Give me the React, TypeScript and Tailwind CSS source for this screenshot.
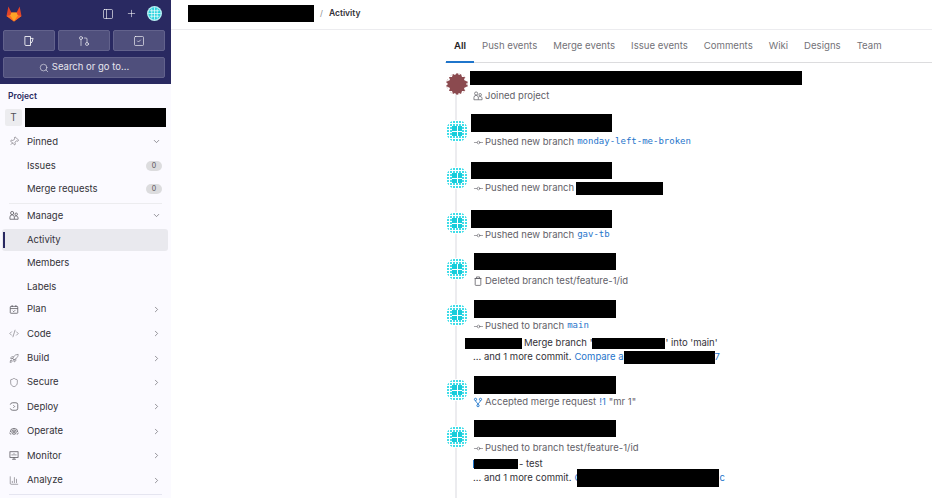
import {
  ChartColumn,
  ChevronDown,
  ChevronRight,
  CodeXml,
  GitCommitHorizontal,
  GitPullRequest,
  PanelLeft,
  Pin,
  Plus,
  Rocket,
  Search,
  Shield,
  SquareCheck,
} from "lucide-react";
import type { ReactNode } from "react";

const Black = ({ className }: { className: string }) => (
  <div className={`bg-black shrink-0 ${className}`} />
);

const Logo = () => (
  <svg width="18" height="18" viewBox="0 0 24 24">
    <path d="M12 22 2 14.5 4.5 2l4 8h7l4-8L22 14.5z" fill="#e24329" />
    <path d="M12 22 2 14.5l6.5-1.5z" fill="#fc6d26" />
    <path d="M12 22l10-7.5-6.5-1.5z" fill="#fc6d26" />
    <path d="M8.5 10h7L17 14l-5 8-5-8z" fill="#fca326" />
  </svg>
);

const IssuesIcon = () => (
  <svg width="12" height="12" viewBox="0 0 16 16" fill="none" stroke="currentColor" strokeWidth="1.1">
    <path d="M2.5 2h7.5v12H4a1.5 1.5 0 0 1-1.5-1.5z" />
    <path d="M10 4.5h3.5L12 9.5l-2 1.5" />
  </svg>
);

const UsersIcon = ({ size = 11 }: { size?: number }) => (
  <svg width={size} height={size} viewBox="0 0 16 16" fill="none" stroke="currentColor" strokeWidth="1.2">
    <circle cx="5" cy="4" r="2.5" />
    <circle cx="11.5" cy="6" r="2" />
    <path d="M1.5 14V10.5a3.5 3.5 0 0 1 7 0V14z" />
    <path d="M8.5 14h6v-2a3 3 0 0 0-5.5-1.8" />
  </svg>
);

const TrashIcon = () => (
  <svg width="10" height="10" viewBox="0 0 16 16" fill="none" stroke="currentColor" strokeWidth="1.3">
    <path d="M3.5 4h9v10a1 1 0 0 1-1 1h-7a1 1 0 0 1-1-1z" />
    <path d="M2.5 4h11M5.5 4V1.5h5V4" />
  </svg>
);

const MergedIcon = () => (
  <svg width="10" height="11" viewBox="0 0 16 16" fill="none" stroke="#1f75cb" strokeWidth="1.5">
    <circle cx="4" cy="3" r="1.8" />
    <circle cx="12" cy="3" r="1.8" />
    <circle cx="8" cy="13" r="1.8" />
    <path d="M4 5c0 3 4 3 4 6M12 5c0 3-4 3-4 6" />
  </svg>
);

const Identicon = () => {
  const cells = [];
  for (let x = 0; x < 7; x++) {
    for (let y = 0; y < 7; y++) {
      const dx = x - 3;
      const dy = y - 3;
      if (dx * dx + dy * dy <= 13 && (Math.abs(dx) > 1 || Math.abs(dy) > 1)) {
        cells.push(<rect key={`${x}-${y}`} x={x * 3 + 0.5} y={y * 3 + 0.5} width="2" height="2" fill="#3fdde8" />);
      }
    }
  }
  return (
    <svg width="22" height="22" viewBox="0 0 22 22" className="shrink-0 rounded-full" shapeRendering="crispEdges">
      <rect width="22" height="22" fill="#ffffff" />
      {cells}
      <rect x="6" y="6" width="10" height="10" fill="#18ccda" />
      <path d="M11 6v10M6 11h10" stroke="#ffffff" strokeWidth="1" />
    </svg>
  );
};

const MaroonAvatar = () => (
  <svg width="22" height="22" viewBox="0 0 22 22" className="shrink-0">
    <circle cx="11" cy="11" r="10.5" fill="none" stroke="#e3d3d4" strokeWidth="1" strokeDasharray="3 4" />
    <path
      d="M11 0l2 2 2-1 1 3 3 0-1 3 4 2-2 2 2 2-4 2 1 3-3 0-1 3-2-1-2 2-2-2-2 1-1-3-3 0 1-3-4-2 2-2-2-2 4-2-1-3 3 0 1-3 2 1z"
      fill="#8b4a4f"
    />
  </svg>
);

const NavRow = ({ icon, label, open }: { icon: ReactNode; label: string; open?: boolean }) => (
  <div className="flex items-center h-[24.4px] pl-[9px] pr-[10px] text-[#333238]">
    <span className="w-[10px] flex justify-center text-[#535158]">{icon}</span>
    <span className="ml-[8px] flex-1">{label}</span>
    {open ? (
      <ChevronDown size={9} className="text-[#737278]" />
    ) : (
      <ChevronRight size={9} className="text-[#737278]" />
    )}
  </div>
);

const SubRow = ({ label, count }: { label: string; count?: number }) => (
  <div className="flex items-center h-[23.3px] pl-[27px] pr-[9px] text-[#333238]">
    <span className="flex-1">{label}</span>
    {count !== undefined && (
      <span className="w-[16px] h-[10px] rounded-full bg-[#dcdcde] text-[7px] leading-[10px] text-center text-[#535158]">
        {count}
      </span>
    )}
  </div>
);

const Sidebar = () => {
  const ic = { size: 11, strokeWidth: 1.25 };
  return (
    <aside className="w-[171px] shrink-0 h-full bg-[#fbfaff] flex flex-col overflow-hidden">
      <div className="h-[84px] bg-[#292961] px-[3px] text-white shrink-0">
        <div className="h-[30px] flex items-center">
          <div className="ml-[2px] -mt-[3px]">
            <Logo />
          </div>
          <div className="flex-1" />
          <PanelLeft size={12} strokeWidth={1.25} className="mb-[3px]" />
          <Plus size={11} strokeWidth={1.25} className="ml-[12px] mb-[3px]" />
          <div className="ml-[10px] mr-[6px] mb-[3px]">
            <svg width="15" height="15" viewBox="0 0 22 22">
              <circle cx="11" cy="11" r="11" fill="#b8f1f4" />
              <circle cx="11" cy="11" r="9" fill="#2cd3de" />
              <path d="M7 4v14M11 2v18M15 4v14M4 7h14M2 11h18M4 15h14" stroke="#ffffff" strokeWidth="1" />
            </svg>
          </div>
        </div>
        <div className="flex gap-[3px] w-[162px]">
          {[<IssuesIcon key="i" />, <GitPullRequest key="m" size={12} strokeWidth={1.25} />, <SquareCheck key="t" size={12} strokeWidth={1.25} />].map((icon, i) => (
            <div
              key={i}
              className="flex-1 h-[21px] rounded-[2px] bg-[#4f4f7c] border border-[#62628c] flex items-center justify-center"
            >
              {icon}
            </div>
          ))}
        </div>
        <div className="mt-[6px] w-[162px] h-[21px] rounded-[2px] bg-[#4f4f7c] border border-[#62628c] flex items-center justify-center gap-[3px] text-[9.5px] text-[#e6e6ee]">
          <Search size={10} strokeWidth={1.5} />
          <span>Search or go to...</span>
        </div>
      </div>

      <div className="text-[9.5px] pt-[6px]">
        <div className="h-[12px] pl-[8px] text-[8.5px] leading-[12px] font-semibold text-[#292961]">
          Project
        </div>
        <div className="flex items-center mt-[6px] pl-[5px] gap-[3px] h-[19px]">
          <div className="w-[17px] h-[17px] rounded-[2px] bg-[#ececef] text-[#535158] text-[10px] flex items-center justify-center">
            T
          </div>
          <Black className="w-[141px] h-[19px]" />
        </div>
        <div className="mt-[2.6px]">
          <NavRow icon={<Pin {...ic} className="rotate-45" />} label="Pinned" open />
          <SubRow label="Issues" count={0} />
          <SubRow label="Merge requests" count={0} />
        </div>
        <div className="mx-[9px] mt-[2px] border-t border-[#ececef]" />
        <div>
          <NavRow icon={<UsersIcon />} label="Manage" open />
          <div className="relative ml-[2px] mr-[3px] mt-[1px] mb-[1px] h-[22px] rounded-[3px] bg-[#e9e9ee] flex items-center pl-[25px] text-[#333238]">
            <div className="absolute left-[1px] top-[3px] w-[2px] h-[16px] bg-[#292961]" />
            Activity
          </div>
          <SubRow label="Members" />
          <SubRow label="Labels" />
        </div>
        <div className="-mt-[1.4px]">
          <NavRow
            icon={
              <svg width="11" height="11" viewBox="0 0 16 16" fill="none" stroke="currentColor" strokeWidth="1.2">
                <rect x="2" y="3" width="12" height="11" rx="1" />
                <path d="M2 6.5h12M5 1v3M11 1v3M6 10l1.5 1.5L10 9" />
              </svg>
            }
            label="Plan"
          />
        </div>
        <NavRow icon={<CodeXml {...ic} />} label="Code" />
        <NavRow icon={<Rocket {...ic} />} label="Build" />
        <NavRow icon={<Shield {...ic} />} label="Secure" />
        <NavRow
          icon={
            <svg width="11" height="11" viewBox="0 0 16 16" fill="none" stroke="currentColor" strokeWidth="1.2">
              <path d="M2 5a4 4 0 0 1 4-3h5a3 3 0 0 1 3 3v6a3 3 0 0 1-3 3H6a4 4 0 0 1-4-3" />
              <path d="M7 6l2 2-2 2" />
            </svg>
          }
          label="Deploy"
        />
        <NavRow
          icon={
            <svg width="11" height="11" viewBox="0 0 16 16" fill="none" stroke="currentColor" strokeWidth="1.2">
              <circle cx="8" cy="9" r="3.5" />
              <circle cx="8" cy="9" r="1.2" />
              <path d="M2 9a6 6 0 0 1 12 0M1 10l2 3M15 10l-2 3" />
            </svg>
          }
          label="Operate"
        />
        <NavRow
          icon={
            <svg width="11" height="11" viewBox="0 0 16 16" fill="none" stroke="currentColor" strokeWidth="1.2">
              <rect x="1.5" y="2" width="13" height="9" />
              <path d="M8 11v3M5 14h6M5 8V6M8 8V4.5M11 8V6" />
            </svg>
          }
          label="Monitor"
        />
        <NavRow icon={<ChartColumn {...ic} />} label="Analyze" />
        <div className="mx-[9px] mt-[2px] border-t border-[#e5e5f0]" />
      </div>
    </aside>
  );
};

const tabs = ["All", "Push events", "Merge events", "Issue events", "Comments", "Wiki", "Designs", "Team"];

const Code = ({ children }: { children: ReactNode }) => (
  <span className="ml-[3px] text-[#1f75cb] font-['DejaVu_Sans_Mono',monospace] text-[9px]">{children}</span>
);

const Sub = ({ icon, children }: { icon: ReactNode; children: ReactNode }) => (
  <div className="flex items-center h-[14px] text-[#626168] whitespace-nowrap">
    <span className="w-[12px] flex shrink-0">{icon}</span>
    {children}
  </div>
);

const Event = ({
  top,
  avatarTop,
  box,
  sub,
  children,
  avatar,
}: {
  top: string;
  avatarTop: string;
  box: string;
  sub: string;
  children: ReactNode;
  avatar?: ReactNode;
}) => (
  <div className={`flex relative ${top}`}>
    <div className={avatarTop}>{avatar ?? <Identicon />}</div>
    <div className="ml-[2px]">
      <Black className={box} />
      <div className={sub}>{children}</div>
    </div>
  </div>
);

export default function App() {
  const push = <GitCommitHorizontal size={11} strokeWidth={1.25} />;
  return (
    <div className="flex w-[932px] h-[498px] overflow-hidden bg-white font-['Inter',sans-serif] text-[9.5px]">
      <Sidebar />
      <main className="flex-1 min-w-0">
        <header className="h-[30px] border-b border-[#ececef] flex items-center pl-[17px] pb-[3px]">
          <Black className="w-[126px] h-[17px]" />
          <span className="ml-[6px] text-[8px] text-[#89888d]">/</span>
          <span className="ml-[6px] text-[8.5px] font-semibold text-[#333238]">Activity</span>
        </header>
        <div className="ml-[274px]">
          <nav className="flex h-[33px] pl-[1px] border-b border-[#dcdcde] text-[#737278] text-[9.6px]">
            {tabs.map((t, i) => (
              <div
                key={t}
                className={
                  i === 0
                    ? "px-[8px] pt-[9px] font-semibold text-[#1f1e24] border-b-2 border-[#1f75cb] h-[33px]"
                    : "px-[8px] pt-[9px]"
                }
              >
                {t}
              </div>
            ))}
          </nav>
          <div className="relative pl-[1px]">
            <div className="absolute left-[10px] top-[20px] w-[2px] h-[420px] bg-[#ececef]" />
            <Event top="mt-[8px]" avatarTop="mt-[2px]" box="w-[332px] h-[14px]" sub="mt-[4px] ml-[3px]" avatar={<MaroonAvatar />}>
              <Sub icon={<UsersIcon size={10} />}>Joined project</Sub>
            </Event>
            <Event top="mt-[11px]" avatarTop="mt-[6px]" box="w-[141px] h-[18px] ml-[1px]" sub="mt-[3px] ml-[3px]">
              <Sub icon={push}>
                Pushed new branch<Code>monday-left-me-broken</Code>
              </Sub>
            </Event>
            <Event top="mt-[13px]" avatarTop="mt-[5px]" box="w-[141px] h-[17px] ml-[1px]" sub="mt-[2px] ml-[3px]">
              <Sub icon={push}>
                Pushed new branch
                <Black className="w-[87px] h-[13px] ml-[2px]" />
              </Sub>
            </Event>
            <Event top="mt-[15px]" avatarTop="mt-[2px]" box="w-[141px] h-[18px] ml-[1px]" sub="mt-[0px] ml-[3px]">
              <Sub icon={push}>
                Pushed new branch<Code>gav-tb</Code>
              </Sub>
            </Event>
            <Event top="mt-[11px]" avatarTop="mt-[5px]" box="w-[142px] h-[17px] ml-[4px]" sub="mt-[4px] ml-[3px]">
              <Sub icon={<TrashIcon />}>Deleted branch test/feature-1/id</Sub>
            </Event>
            <Event top="mt-[12px]" avatarTop="mt-[4px]" box="w-[142px] h-[18px] ml-[4px]" sub="mt-[1px] ml-[3px]">
              <Sub icon={push}>
                Pushed to branch<Code>main</Code>
              </Sub>
              <div className="mt-[3px] -ml-[8px] flex items-center h-[14px] text-[#333238] whitespace-nowrap">
                <Black className="w-[57px] h-[11px]" />
                <span className="ml-[2px]">Merge branch '</span>
                <Black className="w-[73px] h-[11px]" />
                <span>' into 'main'</span>
              </div>
              <div className="flex items-center h-[14px] text-[#333238] whitespace-nowrap">
                ... and 1 more commit.
                <span className="ml-[3px] text-[#1f75cb]">Compare a</span>
                <Black className="w-[91px] h-[13px]" />
                <span className="text-[#1f75cb]">7</span>
              </div>
            </Event>
            <Event top="mt-[12px]" avatarTop="mt-[3px]" box="w-[142px] h-[18px] ml-[4px]" sub="mt-[1px] ml-[3px]">
              <Sub icon={<MergedIcon />}>
                Accepted merge request<span className="ml-[3px] text-[#1f75cb]">!1</span>
                <span className="ml-[3px]">"mr 1"</span>
              </Sub>
            </Event>
            <Event top="mt-[11px]" avatarTop="mt-[6px]" box="w-[142px] h-[17px] ml-[4px]" sub="mt-[4px] ml-[3px]">
              <Sub icon={push}>Pushed to branch test/feature-1/id</Sub>
              <div className="mt-[2px] flex items-center h-[14px] text-[#333238] whitespace-nowrap">
                <div className="w-[1px] h-[8px] bg-[#1f75cb]" />
                <Black className="w-[44px] h-[10px]" />
                <span className="ml-[1px]">- test</span>
              </div>
              <div className="flex items-center h-[14px] text-[#333238] whitespace-nowrap">
                ... and 1 more commit.
                <span className="ml-[3px] text-[#1f75cb]">C</span>
                <Black className="-ml-[4px] w-[142px] h-[18px]" />
                <span className="text-[#1f75cb]">c</span>
              </div>
            </Event>
          </div>
        </div>
      </main>
    </div>
  );
}
